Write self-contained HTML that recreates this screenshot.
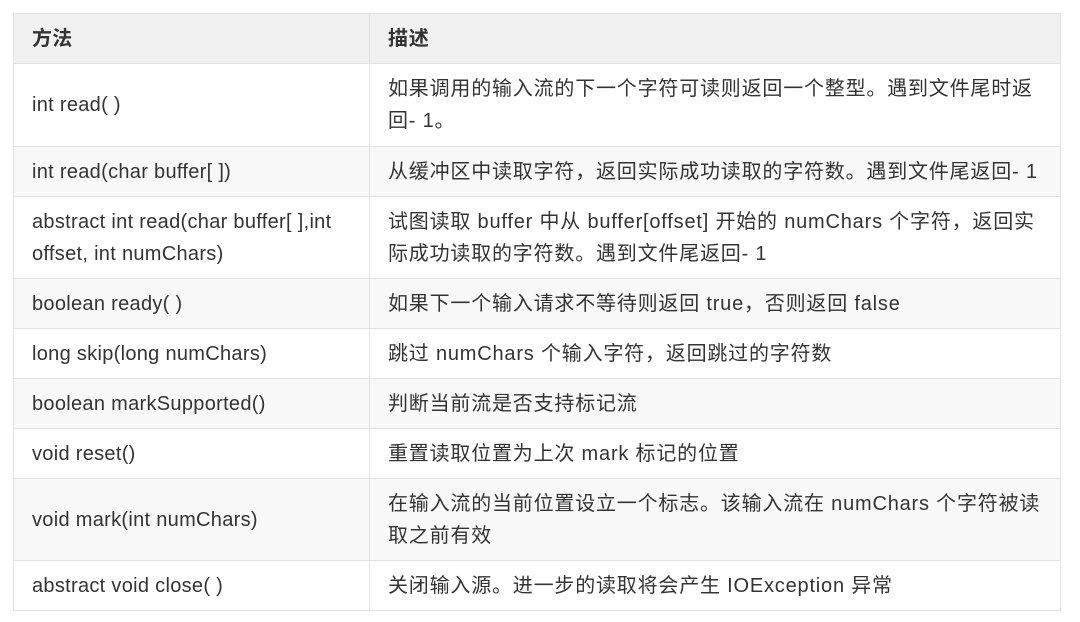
<!DOCTYPE html>
<html><head><meta charset="utf-8"><style>
body{margin:0;background:#fff;width:1080px;height:622px;overflow:hidden;font-family:"Liberation Sans","Noto Sans CJK SC",sans-serif;color:#333;}
table{position:absolute;left:13px;top:13px;width:1048px;border-collapse:collapse;font-size:20px;letter-spacing:0.3px;table-layout:fixed;}
td,th{border:1px solid #dfe2e5;padding:0 18px 0 18px;text-align:left;line-height:32px;vertical-align:middle;}
td+td,th+th{letter-spacing:0.8px;}
th{background:#f0f0f0;font-weight:bold;height:49px;}
tr:nth-child(odd) td{background:#f8f8f8;}
td:first-child,th:first-child{width:312px;padding-right:25px;}
</style></head><body>
<table>
<tr><th>方法</th><th>描述</th></tr>
<tr><td style="height:82px">int read( )</td><td>如果调用的输入流的下一个字符可读则返回一个整型。遇到文件尾时返回- 1。</td></tr>
<tr><td style="height:49px">int read(char buffer[ ])</td><td>从缓冲区中读取字符，返回实际成功读取的字符数。遇到文件尾返回- 1</td></tr>
<tr><td style="height:81px">abstract int read(char buffer[ ],int offset, int numChars)</td><td>试图读取 buffer 中从 buffer[offset] 开始的 numChars 个字符，返回实际成功读取的字符数。遇到文件尾返回- 1</td></tr>
<tr><td style="height:49px">boolean ready( )</td><td>如果下一个输入请求不等待则返回 true，否则返回 false</td></tr>
<tr><td style="height:49px">long skip(long numChars)</td><td>跳过 numChars 个输入字符，返回跳过的字符数</td></tr>
<tr><td style="height:49px">boolean markSupported()</td><td>判断当前流是否支持标记流</td></tr>
<tr><td style="height:49px">void reset()</td><td>重置读取位置为上次 mark 标记的位置</td></tr>
<tr><td style="height:81px">void mark(int numChars)</td><td>在输入流的当前位置设立一个标志。该输入流在 numChars 个字符被读取之前有效</td></tr>
<tr><td style="height:49px">abstract void close( )</td><td>关闭输入源。进一步的读取将会产生 IOException 异常</td></tr>
</table>
</body></html>
